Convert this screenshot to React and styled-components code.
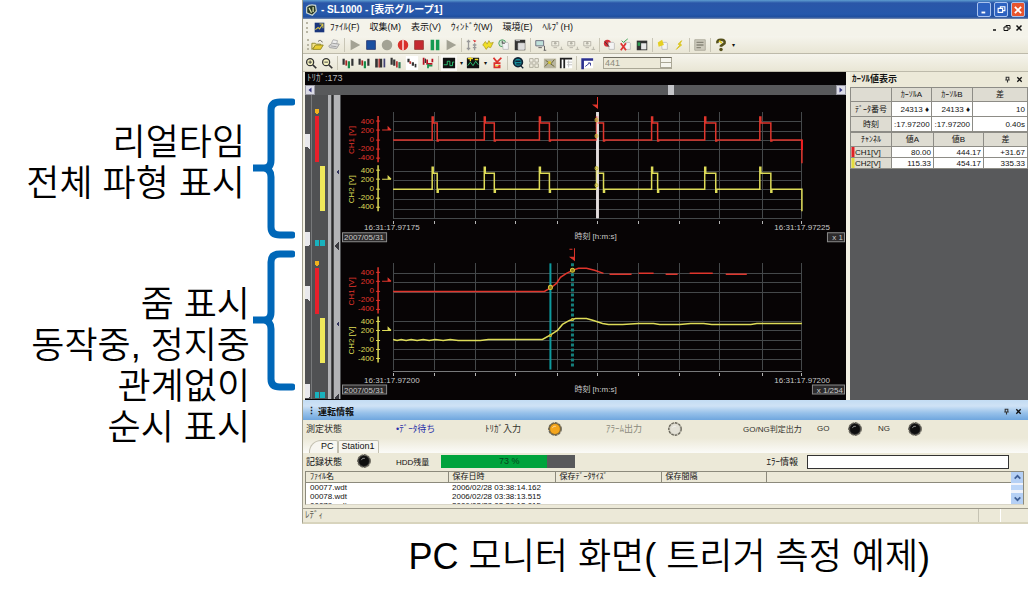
import styled, { createGlobalStyle } from 'styled-components';

const GlobalStyle = createGlobalStyle`
  * { box-sizing: border-box; }
  body {
    margin: 0;
    background: #fff;
    color: #111;
    font-family: "Liberation Sans", "Noto Sans CJK JP", sans-serif;
    font-size: 9px;
  }
  button, input { font: inherit; color: inherit; }
`;

const Page = styled.main`
  display: grid;
  grid-template-columns: 302px 1fr;
`;

const Notes = styled.aside`
  display: flex;
  flex-direction: column;
  gap: 11px;
  padding: 98px 7px 0 0;
`;

const NoteRow = styled.div`
  display: flex;
  align-items: flex-start;
  height: 141px;
`;

const NoteText = styled.p`
  flex: 1;
  margin: 0;
  padding-top: ${({ $top }) => $top}px;
  padding-right: ${({ $right }) => $right}px;
  text-align: right;
  white-space: nowrap;
  font: 350 36px/41px "Liberation Sans", "Noto Sans CJK KR", sans-serif;
  color: #000;
`;

const Caption = styled.p`
  grid-column: 2;
  margin: 0;
  padding: 12px 98px 0 0;
  text-align: right;
  white-space: nowrap;
  font: 350 36px/41px "Liberation Sans", "Noto Sans CJK KR", sans-serif;
  color: #000;
`;

const Window = styled.section`
  min-width: 0;
  background: #ece9d8;
  border-left: 1px solid #a09e8e;
  border-bottom: 2px solid #d8d4bd;
`;

const TitleBar = styled.header`
  display: flex;
  align-items: center;
  gap: 3px;
  height: 19px;
  padding: 0 3px 0 2px;
  background: linear-gradient(#5e9dd0 0, #2a56a8 3px, #2658ab 14px, #1f4f9f 17px, #7e8fae 19px);
  color: #fff;
`;

const WindowTitle = styled.h1`
  flex: 1;
  margin: 0;
  font-size: 10px;
  font-weight: 700;
  line-height: 17px;
`;

const CaptionButton = styled.button`
  display: grid;
  place-items: center;
  width: 14px;
  height: 15px;
  padding: 0;
  border: 1px solid #a9c3ee;
  border-radius: 2px;
  background: ${({ $close }) => ($close ? '#e8552f' : '#2d62c0')};
`;

const MenuBar = styled.nav`
  display: flex;
  align-items: center;
  gap: 5px;
  height: 17px;
  padding: 0 5px 0 3px;
  background: #f4f3ea;
`;

const MenuList = styled.div`
  display: flex;
  gap: 10px;
`;

const MenuButton = styled.button`
  padding: 0;
  border: 0;
  background: none;
  font-size: 9px;
  line-height: 15px;
  white-space: nowrap;
`;

const ChildControls = styled.div`
  display: flex;
  gap: 4px;
  margin-left: auto;
`;

const BareButton = styled.button`
  display: grid;
  place-items: center;
  padding: 0;
  border: 0;
  background: none;
`;

const Grip = styled.span`
  width: 3px;
  height: 11px;
  border-left: 2px dotted #b9b6a5;
`;

const ToolBar = styled.div`
  display: flex;
  align-items: center;
  height: 18px;
  padding-left: ${({ $left }) => $left}px;
  border-bottom: 1px solid #bdbaaa;
  background: linear-gradient(#f5f4ec, #e9e6d5);
`;

const ToolButton = styled.button`
  display: grid;
  place-items: center;
  width: 16px;
  height: 16px;
  padding: 0;
  border: 0;
  background: ${({ $on }) => ($on ? '#fbfaf6' : 'none')};
`;

const DropMark = styled.button`
  width: 8px;
  padding: 0;
  border: 0;
  background: none;
  font-size: 6px;
`;

const Divider = styled.span`
  width: 1px;
  height: 14px;
  margin: 0 2px;
  background: #c9c6b6;
`;

const Spinner = styled.div`
  display: flex;
  width: 69px;
  height: 12px;
  margin-left: 8px;
  border: 1px solid #aaa796;
  border-top-color: #6f6d61;
`;

const SpinnerInput = styled.input`
  flex: 1;
  min-width: 0;
  padding: 0 1px;
  border: 0;
  background: #ece9d8;
  color: #8b897c;
  font-size: 9px;
`;

const SpinnerKeys = styled.div`
  display: flex;
  flex-direction: column;
  width: 11px;
  border-left: 1px solid #aaa796;
`;

const SpinnerKey = styled.button`
  flex: 1;
  padding: 0;
  border: 0;
  border-bottom: 1px solid #aaa796;
  background: #f6f5ee;
`;

const Workspace = styled.div`
  display: grid;
  grid-template-columns: 1fr 178px;
  gap: 4px;
  padding-left: 2px;
  background: #f3f1e4;
`;

const WaveView = styled.div`
  min-width: 0;
  background: #070405;
`;

const WaveInfo = styled.div`
  height: 13px;
  padding-left: 2px;
  color: #b9b9b9;
  font-size: 9px;
  line-height: 13px;
`;

const ScrollTrack = styled.div`
  display: flex;
  align-items: center;
  justify-content: space-between;
  height: 10px;
  background: #58595b;
`;

const ScrollEnd = styled.button`
  display: grid;
  place-items: center;
  width: 10px;
  height: 10px;
  padding: 0;
  border: 1px solid #9a9aa4;
  background: #dcdce6;
`;

const ScrollThumb = styled.span`
  width: 6px;
  height: 10px;
  margin-left: 190px;
  background: #c4c5c8;
`;

const WaveBody = styled.div`
  display: grid;
  grid-template-columns: 36px 1fr;

  svg {
    display: block;
    width: 100%;
  }
`;

const CursorDock = styled.aside`
  min-width: 0;
  background: #58595b;
`;

const DockHeader = styled.h2`
  display: flex;
  align-items: center;
  gap: 5px;
  height: 15px;
  margin: 0;
  padding: 0 5px 0 2px;
  background: #ece9d8;
  font-size: 9px;
  font-weight: 700;
  line-height: 13px;

  span { flex: 1; }
`;

const CursorTable = styled.table`
  width: 100%;
  table-layout: fixed;
  border-collapse: collapse;
  font-size: 8px;
  line-height: ${({ $row }) => $row - 2}px;
  background: #fff;

  th, td {
    height: ${({ $row }) => $row}px;
    padding: 0 2px;
    border: 1px solid #8d8c86;
    overflow: hidden;
    white-space: nowrap;
    text-align: right;
  }
  th {
    background: #dedcd2;
    font-weight: 400;
    text-align: center;
  }
  thead th { height: 14px; }
`;

const ChannelHead = styled.th`
  && {
    padding-left: 4px;
    background: linear-gradient(90deg, ${({ $color }) => $color} 3px, #dedcd2 3px);
    text-align: left;
  }
`;

const Pane = styled.section`
  background: #ece9d8;
`;

const PaneHeader = styled.h2`
  display: flex;
  align-items: center;
  gap: 2px;
  height: 20px;
  margin: 0;
  padding: 3px 6px 0 4px;
  background: linear-gradient(#c3dcf3, #cfe2f5 6px, #97c1ea 13px, #6fa6de);
  font-size: 9px;
  font-weight: 700;

  span { flex: 1; }
  button + button { margin-left: 3px; }
`;

const StateRow = styled.div`
  display: grid;
  grid-template-columns: 90px 89px 62px 59px 61px 76px 74px 30px 31px 29px 1fr;
  align-items: center;
  height: 18px;
  padding-left: 3px;
  white-space: nowrap;
  font-size: 9px;
`;

const StateText = styled.span`
  color: ${({ $color }) => $color || '#33322d'};
  font-size: ${({ $small }) => ($small ? 8 : 9)}px;
`;

const Tabs = styled.div`
  display: flex;
  align-items: flex-end;
  height: 15px;
  padding-left: 6px;
  background: linear-gradient(#ece9d8, #fbfbf8);
`;

const Tab = styled.button`
  height: 13px;
  padding: 0 3px;
  padding-left: ${({ $first }) => ($first ? 11 : 3)}px;
  border: 1px solid #c3c0b0;
  border-bottom: 0;
  border-radius: ${({ $first }) => ($first ? '12px 2px 0 0' : '2px 2px 0 0')};
  background: #f7f6f0;
  font-size: 9px;
  line-height: 11px;
`;

const RecordRow = styled.div`
  display: flex;
  align-items: center;
  height: 18px;
  padding: 0 19px 0 3px;
  white-space: nowrap;
  font-size: 9px;
`;

const RecordLabel = styled.span`
  width: ${({ $width }) => $width}px;
  font-size: ${({ $small }) => ($small ? 8 : 9)}px;
`;

const DiskMeter = styled.div`
  width: 134px;
  height: 13px;
  background: #58595b;
`;

const DiskFill = styled.div`
  height: 100%;
  background: #00a33d;
  color: #06431c;
  line-height: 13px;
  padding-left: 58px;
`;

const ErrorField = styled.label`
  display: flex;
  flex: 1;
  align-items: center;
  justify-content: flex-end;
  gap: 9px;
`;

const ErrorInput = styled.input`
  width: 202px;
  height: 14px;
  border: 1px solid #333;
  background: #fff;
`;

const FileArea = styled.div`
  display: flex;
  height: 34px;
  margin: 0 4px 0 2px;
  border: 1px solid #8c8a7c;
  border-bottom-color: #d9d6c8;
  background: #fff;
  overflow: hidden;
`;

const FileTable = styled.table`
  flex: 1;
  align-self: flex-start;
  width: 100%;
  table-layout: fixed;
  border-collapse: collapse;
  font-size: 8px;

  th, td {
    height: 9px;
    padding: 0 4px;
    overflow: hidden;
    text-align: left;
    white-space: nowrap;
    font-weight: 400;
    line-height: 9px;
  }
  th {
    height: 11px;
    border-right: 1px solid #8c8a7c;
    border-bottom: 1px solid #8c8a7c;
    background: #ece9d8;
  }
  th:last-child { border-right: 0; }
`;

const FileScroll = styled.div`
  display: flex;
  flex-direction: column;
  justify-content: space-between;
  width: 12px;
  background: #f0f3fb;
`;

const FileScrollKey = styled.button`
  display: grid;
  place-items: center;
  height: 11px;
  padding: 0;
  border: 0;
  background: #b5d0f5;
`;

const FileScrollThumb = styled.span`
  height: 5px;
  background: #bdd6f8;
`;

const StatusBar = styled.footer`
  display: flex;
  justify-content: space-between;
  height: 14px;
  margin-top: 3px;
  padding: 0 27px 0 2px;
  border-top: 1px solid #9c998b;
  color: #55534a;
  font-size: 9px;
  line-height: 13px;
`;

const StatusCell = styled.span`
  width: 23px;
  border-left: 1px solid #c6c3b3;
  border-right: 1px solid #fff;
`;

function Brace() {
  return (
    <svg width="45" height="141" viewBox="0 0 45 141" fill="none" stroke="#0067b8" strokeWidth="7" strokeLinecap="round" aria-hidden="true">
      <path d="M42 4H30Q21 4 21 12V62Q21 70 14 70H3H14Q21 71 21 79V129Q21 137 30 137H42" />
    </svg>
  );
}

const disc = (
  <path d="M6 5h6l1 1v7H7z" fill="#f4f4f4" stroke="#aaa" strokeWidth=".7" />
);

const icons = {
  open: (
    <>
      <path d="M1 13V6h4l1 1h5v2H5z" fill="#f5e48a" stroke="#8c8325" />
      <path d="M2 13 5 8h9l-3 5z" fill="#e8cd32" stroke="#8c8325" />
      <path d="M8 4q3-3 5 1" stroke="#555" fill="none" />
    </>
  ),
  print: (
    <>
      <path d="m5 6 2-4 5 1-1 4" fill="#eee" stroke="#aaa" />
      <path d="m2 9 4-3 8 1-3 5-8-1z" fill="#ddd" stroke="#999" />
      <path d="m4 9 7 1" stroke="#999" />
    </>
  ),
  play: <path d="M3 2v12l11-6z" fill="#a3a294" />,
  blue: <path d="M3 3h10v10H3z" fill="#1a4fa0" stroke="#2b3c74" />,
  record: <circle cx="8" cy="8" r="6" fill="#a3a294" />,
  split: (
    <>
      <circle cx="8" cy="8" r="6" fill="#d8302a" />
      <path d="M8 2v12" stroke="#fff" strokeWidth="1.500" />
    </>
  ),
  stop: <path d="M3 3h10v10H3z" fill="#c52a30" stroke="#9b3a35" />,
  pause: <path d="M3 2h4v12H3zM9 2h4v12H9z" fill="#169a52" />,
  level: (
    <>
      <path d="M4 2v12M11 6v8M2 4h4M9 8h4M2 12h4M9 11h4" stroke="#999" strokeWidth="1.500" />
      <path d="M9 2l4 1-2 2z" fill="#d33" />
    </>
  ),
  link: <path d="M2 8l3-4 2 3 2-4 2 3 3-1-3 6-3-1-2 3-2-3z" fill="#f1df25" stroke="#b5a52a" />,
  clock: (
    <>
      <circle cx="6" cy="6" r="4" fill="#cfe8d3" stroke="#459a5e" />
      {disc}
      <path d="M6 3v3h3" stroke="#444" fill="none" />
    </>
  ),
  form: (
    <>
      <path d="M2 2h12v12H2z" fill="#333" />
      <path d="M6 6h7v7H6zM3 3h5" fill="#ddd" stroke="#ddd" />
    </>
  ),
  screen: (
    <>
      <path d="M2 3h9v6H2z" fill="#bfe0da" stroke="#667" />
      <path d="M5 11h4M12 9v5M11 14h3" stroke="#555" />
    </>
  ),
  screenOff: (
    <>
      <path d="M2 4h8v5H2zM4 11h4M11 13h4M13 10v3" fill="none" stroke="#b2b0a5" />
      <circle cx="6" cy="6" r="1.500" fill="#b2b0a5" />
    </>
  ),
  markRed: (
    <>
      <circle cx="5" cy="6" r="4" fill="#d32e36" />
      {disc}
      <path d="M2 4l5 6" stroke="#333" />
    </>
  ),
  markCross: (
    <>
      {disc}
      <path d="M2 6l6 8M8 6l-6 8" stroke="#df3333" fill="none" strokeWidth="2" />
      <path d="M3 3l2 2 5-4" stroke="#289846" />
    </>
  ),
  markFlag: (
    <>
      <path d="M2 3h12v11H2z" fill="#333" />
      <path d="M7 6h6v7H7z" fill="#e8e8e8" />
      <path d="M3 5h3v4H3z" fill="#2b9d52" />
    </>
  ),
  bell: (
    <>
      {disc}
      <path d="M2 5l5-3 2 6-6 2z" fill="#e5cf24" />
    </>
  ),
  spark: <path d="M11 3l-4 4 2 1-4 5 1-1 5-4-2-1z" fill="#e5cf24" stroke="#d8c220" />,
  list: (
    <>
      <path d="M2 2h12v12H2z" fill="#ccc9bb" stroke="#aaa899" />
      <path d="M4 5h8M4 8h8M4 11h5" stroke="#888679" strokeWidth="1.500" />
    </>
  ),
  help: (
    <>
      <path d="M4 6q-1-4 4-4t4 4l-4 3v1" fill="none" stroke="#55501c" strokeWidth="3" />
      <path d="M6 3l3 3" stroke="#e5cf24" strokeWidth="2" />
      <circle cx="8" cy="13" r="2" fill="#55501c" />
    </>
  ),
  zoomIn: (
    <>
      <circle cx="7" cy="7" r="4" fill="#f6f3c0" stroke="#333" strokeWidth="1.500" />
      <path d="M10 10l4 4" stroke="#333" strokeWidth="2" />
      <path d="M5 7h4M7 5v4" stroke="#333" />
    </>
  ),
  zoomOut: (
    <>
      <circle cx="7" cy="7" r="4" fill="#f6f3c0" stroke="#333" strokeWidth="1.500" />
      <path d="M10 10l4 4" stroke="#333" strokeWidth="2" />
      <path d="M5 7h4" stroke="#333" />
    </>
  ),
  barsA: (
    <>
      <path d="M3 3v7M13 3v8" stroke="#333" strokeWidth="2.500" />
      <path d="M6 5v6" stroke="#a22" strokeWidth="2" />
      <path d="M9 6v8" stroke="#178b48" strokeWidth="2.500" />
    </>
  ),
  barsB: (
    <>
      <path d="M4 3v10M9 3v10" stroke="#333" strokeWidth="3" />
      <path d="M7 3v10" stroke="#a22" strokeWidth="1.500" />
      <path d="M13 3v10" stroke="#447" strokeWidth="2" />
    </>
  ),
  barsC: (
    <>
      <path d="M3 2v8M6 4v7" stroke="#333" strokeWidth="2.500" />
      <path d="M9 6v7" stroke="#b33" strokeWidth="2" />
      <path d="M12 7v7" stroke="#2a7a55" strokeWidth="2.500" />
    </>
  ),
  barsE: (
    <>
      <path d="M1 0h14v16H1z" fill="#fff" />
      <path d="M4 3v4M9 7v4" stroke="#333" strokeWidth="2.500" />
      <path d="M6 6v3" stroke="#b33" strokeWidth="2" />
      <path d="M12 9v4" stroke="#333" strokeWidth="2" />
    </>
  ),
  barsD: (
    <>
      <path d="M3 2v8M7 4v5h6M13 3v4" stroke="#b12" strokeWidth="2" />
      <path d="M8 9v5M8 11h5" stroke="#1a9350" strokeWidth="2" />
      <path d="M5 3v5" stroke="#333" strokeWidth="1.500" />
    </>
  ),
  wave: (
    <>
      <path d="M1 2h14v12H1z" fill="#111" />
      <path d="M2 10h4V6h3v5h3V7h2" fill="none" stroke="#2fd07a" />
    </>
  ),
  waveStar: (
    <>
      <path d="M1 2h14v12H1z" fill="#111" />
      <path d="M2 11l3-4 3 4 3-5 3 4" fill="none" stroke="#2fd07a" />
      <path d="M5 1v5M2 3h6M10 4h4" stroke="#f0d927" strokeWidth="1.500" />
    </>
  ),
  pin: (
    <>
      <path d="M4 2l4 5 5-5M4 8h8" fill="none" stroke="#dc302b" strokeWidth="2" />
      <path d="M5 9v4h7M9 11h3" stroke="#dc302b" strokeWidth="2" />
      <path d="M6 11h4" stroke="#f0d927" />
    </>
  ),
  globe: (
    <>
      <circle cx="8" cy="7" r="5" fill="#168e9b" stroke="#123" strokeWidth="2" />
      <path d="M5 6h6M6 9h5M11 11l3 3" stroke="#123" strokeWidth="1.500" />
    </>
  ),
  grid: <path d="M3 3h4v4H3zM9 3h4v4H9zM3 9h4v4H3zM9 9h4v4H9z" fill="none" stroke="#aaa798" />,
  picture: (
    <>
      <path d="M1 3h14v11H1z" fill="#b8b59f" />
      <path d="M2 12l5-5 2 2 4-5M3 5l10 7" stroke="#67602a" fill="none" />
      <path d="M6 6h3v3H6z" fill="#d8c930" />
    </>
  ),
  columns: (
    <>
      <path d="M2 2h13v12H2z" fill="#fff" />
      <path d="M2 14V3h13M6 4v10" stroke="#222" fill="none" strokeWidth="2" />
      <path d="M9 7h6M9 10h6M11 5v8" stroke="#bbb" />
    </>
  ),
  window: (
    <>
      <path d="M2 2h13v12H2z" fill="#fff" />
      <path d="M3 15V4h12" stroke="#2a2f8f" fill="none" strokeWidth="3" />
      <path d="M6 12l5-4M9 8h3v3" stroke="#2a2f8f" fill="none" />
    </>
  ),
  app: (
    <>
      <path d="M1 1h14v14H1z" fill="#19357c" />
      <path d="M2 11l4-3 2 2 5-7M8 3h5v6" stroke="#dfc942" fill="none" strokeWidth="1.500" />
    </>
  ),
  logo: (
    <>
      <path d="M2 5q4-4 11-2l1 7-5 5-7-3z" fill="#2b3b2b" stroke="#c9d4cf" strokeWidth="1.500" />
      <path d="M5 6l3 6M10 5v6" stroke="#dfe5ac" strokeWidth="1.500" />
    </>
  ),
  pushpin: <path d="M5 3h6v6H5zM3 9h10M8 9v6" fill="none" stroke="#333" strokeWidth="2.500" />,
  close: <path d="M3 3l10 10M13 3L3 13" stroke="currentColor" strokeWidth="3" />,
  minimize: <path d="M4 12h6" stroke="currentColor" strokeWidth="3" />,
  restore: <path d="M6 6V3h8v7h-3M2 6h8v7H2z" fill="none" stroke="currentColor" strokeWidth="2" />,
  left: <path d="M11 3v10L5 8z" fill="#33357c" />,
  right: <path d="M5 3v10l6-5z" fill="#33357c" />,
  up: <path d="M3 10l5-5 5 5" fill="none" stroke="#3f5f95" strokeWidth="3" />,
  down: <path d="M3 6l5 5 5-5" fill="none" stroke="#3f5f95" strokeWidth="3" />,
};

function Icon({ name, size = 14 }) {
  return (
    <svg width={size} height={size} viewBox="0 0 16 16" fill="none" aria-hidden="true">
      {icons[name]}
    </svg>
  );
}

function Lamp({ color, ring }) {
  return (
    <svg width="16" height="16" viewBox="0 0 18 18" aria-hidden="true">
      <circle cx="9" cy="9" r="7" fill={ring} stroke="#6a675c" strokeWidth="1.500" strokeDasharray="3 1" />
      <circle cx="9" cy="9" r="5.500" fill={color} />
      <path d="M6 8q1-3 4-2" stroke="#fff" strokeOpacity=".6" fill="none" />
    </svg>
  );
}

const transportTools = [
  ['open', 'print'],
  ['play', 'blue', 'record', 'split', 'stop', 'pause', 'play'],
  ['level', 'link', 'clock', 'form'],
  ['screen', 'screenOff', 'screenOff', 'screenOff'],
  ['markRed', 'markCross', 'markFlag'],
  ['bell', 'spark'],
  ['list'],
  ['help', 'drop'],
];

const viewTools = [
  ['zoomIn', 'zoomOut'],
  ['barsA', 'barsA', 'barsB', 'barsC', 'barsE', 'barsD'],
  ['wave', 'drop', 'waveStar', 'drop', 'pin'],
  ['globe', 'grid', 'picture', 'columns'],
  ['window'],
];

function ToolGroups({ groups }) {
  return groups.map((group, g) => [
    g > 0 && <Divider key={`d${g}`} />,
    ...group.map((name, i) =>
      name === 'drop' ? (
        <DropMark key={`${g}-${i}`} aria-label="more">▾</DropMark>
      ) : (
        <ToolButton key={`${g}-${i}`} aria-label={name} $on={name === 'wave'}>
          <Icon name={name} />
        </ToolButton>
      )
    ),
  ]);
}

const menus = ['ﾌｧｲﾙ(F)', '収集(M)', '表示(V)', 'ｳｨﾝﾄﾞｳ(W)', '環境(E)', 'ﾍﾙﾌﾟ(H)'];

const RED = '#e0352c';
const YELLOW = '#dedc58';
const gridX = [52, 93, 134, 174, 216, 256, 297, 338, 378, 421, 460];

// [start, end] of every pulse in the overview
const pulses = [[92, 96], [144, 153], [199, 208], [256, 262], [311, 316], [364, 374], [419, 429]];

function pulsePath(base, top, under, end) {
  const steps = pulses.map(
    ([a, b]) => `H${a - 1}V${top - 6}H${a}V${top}H${b}V${base + under}H${b + 1}V${base}`
  );
  return `M52 ${base}${steps.join('')}H460V${end}`;
}

function Axis({ color, label, y }) {
  return (
    <g fill={color} stroke="none" fontSize="8">
      <path d={`M37 ${y - 24}V${y + 22}`} stroke={color} strokeWidth="1.500" />
      {['400', '200', '0', '-200', '-400'].map((text, i) => (
        <g key={text}>
          <text x="33" y={y - 16 + i * 9} textAnchor="end">{text}</text>
          <path d={`M35 ${y - 19 + i * 9 + (i > 1 ? 1 : 0)}h4`} stroke={color} />
        </g>
      ))}
      <text transform={`translate(13 ${y}) rotate(-90)`} textAnchor="middle">{label}</text>
      <path d={`M41 ${y - 10}h9M47 ${y - 10}v-3l3 3`} stroke={color} />
    </g>
  );
}

function TimeScale({ y, start, end, zoom, zoomWidth }) {
  return (
    <g fill="#c9c9c9" fontSize="8">
      <text x="23" y={y}>{start}</text>
      <text x="488" y={y} textAnchor="end">{end}</text>
      <text x="254" y={y + 9} textAnchor="middle">時刻 [h:m:s]</text>
      <path d={`M1.500 ${y + 2.500}h44v9h-44zM${502.500 - zoomWidth} ${y + 2.500}h${zoomWidth}v9h-${zoomWidth}z`} fill="#2d2b2c" stroke="#8a8a8a" />
      <text x="3" y={y + 10}>2007/05/31</text>
      <text x="501" y={y + 10} textAnchor="end">{zoom}</text>
    </g>
  );
}

function WaveChart() {
  const top = [26, 36, 45, 54, 76, 85, 94, 104, 114, 123];
  const bottom = [178, 187, 197, 226, 235, 245, 254, 264];
  return (
    <svg viewBox="0 0 504 304" role="img" aria-label="CH1 / CH2">
      <g stroke="#44484a" strokeWidth="1" shapeRendering="crispEdges">
        <path d={gridX.map((x) => `M${x} 17V123M${x} 168V274`).join('')} />
        <path d={top.map((y) => `M52 ${y}H460`).join('')} />
        <path d={bottom.map((y) => `M52 ${y}H460`).join('')} />
        <path d="M52 276H460" stroke="#77797a" />
        <path d={gridX.map((x) => `M${x} 126v3M${x} 277v3`).join('')} stroke="#b5b5b5" />
      </g>

      <path d="M256 17V123" stroke="#cfcaca" strokeWidth="3" />
      <path d={pulsePath(45, 28, 1, 68)} fill="none" stroke={RED} strokeWidth="1.500" />
      <path d={pulsePath(94, 78, 3, 116)} fill="none" stroke={YELLOW} strokeWidth="1.500" />
      <path d="M460 45V55" stroke="#f01f22" strokeWidth="2" />
      <path d="M256 17V123" stroke="#e9e5e5" strokeWidth="2" strokeOpacity=".7" />
      <g fill="none" stroke="#c9bd3a">
        <circle cx="255" cy="25" r="1.500" />
        <circle cx="255" cy="41" r="1.500" />
        <circle cx="255" cy="73" r="1.500" />
        <circle cx="255" cy="90" r="1.500" />
      </g>
      <path d="M256 2V13M252 10h4v3z" stroke={RED} fill={RED} />

      <Axis color={RED} label="CH1 [V]" y={45} />
      <Axis color={YELLOW} label="CH2 [V]" y={94} />
      <TimeScale y={135} start="16:31:17.97175" end="16:31:17.97225" zoom="x 1" zoomWidth={17} />

      <path d="M209 168V274" stroke="#0d9a9e" strokeWidth="2" />
      <path d="M231 168V272" stroke="#147f7c" strokeWidth="3" strokeDasharray="3 2" />
      <path
        d="M52 196H203L210 192L215 188L219 182L225 178L231 175L237 173H245L253 175L262 178"
        fill="none"
        stroke={RED}
        strokeWidth="1.500"
      />
      <path d="M268 179h22M297 178h15M324 179h12M348 178h23M384 179h21" stroke={RED} strokeWidth="1.500" />
      <path
        d="M52 244l4 1 4-1 5 1 5-1 6 1 6-1 6 1 6-1 8 1 7-1 8 1h22l8-1h54L210 239L216 235L221 229L228 225L234 223H245L252 225L261 228L267 229H281L297 228H312L318 229H338L349 228H362L370 229H409L415 228H460"
        fill="none"
        stroke={YELLOW}
        strokeWidth="1.500"
      />
      <g fill="#8f7a1e" stroke="#d8c83a">
        <circle cx="209" cy="192" r="2" />
        <circle cx="231" cy="175" r="2" />
        <circle cx="209" cy="240" r="1" />
        <circle cx="231" cy="224" r="1" />
      </g>
      <path d="M233 153V165M229 162h4v3zM228 154h3" stroke={RED} fill={RED} />

      <Axis color={RED} label="CH1 [V]" y={196} />
      <Axis color={YELLOW} label="CH2 [V]" y={245} />
      <TimeScale y={287} start="16:31:17.97200" end="16:31:17.97200" zoom="x 1/254" zoomWidth={32} />
    </svg>
  );
}

function RangeStrip() {
  return (
    <svg viewBox="0 0 36 304" preserveAspectRatio="none" shapeRendering="crispEdges" aria-hidden="true">
      <path d="M0 0H36V304H0z" fill="#505153" />
      <path d="M6 0V304" stroke="#77787a" />
      <path d="M23 0h3v304h-3zM29 0h6v304h-6z" fill="#b3b4b7" />
      <path d="M27 0V304" stroke="#2b2b2c" />
      {[0, 152].map((y) => (
        <g key={y} transform={`translate(0 ${y})`}>
          <path d="M10 14h4v3l-2 3-2-3z" fill="#f0b21e" />
          <path d="M10 21h4v46h-4z" fill="#e8202b" />
          <path d="M15 71h5v45h-5z" fill="#efe75a" />
          <path d="M10 145h4v6h-4zM15 145h5v6h-5z" fill="#19b1bd" />
          <path d="M0 39h5v15l-3-2H0zM0 137h5v13l-3 1H0z" fill="#e9e9ec" />
          <path d="M31 77l3-3v6z" fill="#33345c" />
          <path d="M29 151l5-4v8z" fill="#3a3a40" />
        </g>
      ))}
    </svg>
  );
}

const files = [
  ['00077.wdt', '2006/02/28 03:38:14.162'],
  ['00078.wdt', '2006/02/28 03:38:13.515'],
  ['00079.wdt', '2006/02/28 03:38:13.015'],
];

function CursorPanel() {
  return (
    <CursorDock>
      <DockHeader>
        <span>ｶｰｿﾙ値表示</span>
        <BareButton aria-label="pin"><Icon name="pushpin" size={7} /></BareButton>
        <BareButton aria-label="close"><Icon name="close" size={7} /></BareButton>
      </DockHeader>
      <CursorTable $row={15}>
        <colgroup>
          <col width="41" />
          <col width="40" />
          <col width="41" />
          <col />
        </colgroup>
        <thead>
          <tr><th /><th>ｶｰｿﾙA</th><th>ｶｰｿﾙB</th><th>差</th></tr>
        </thead>
        <tbody>
          <tr><th>ﾃﾞｰﾀ番号</th><td>24313 ♦</td><td>24133 ♦</td><td>10</td></tr>
          <tr><th>時刻</th><td>:17.97200</td><td>:17.97200</td><td>0.40s</td></tr>
        </tbody>
      </CursorTable>
      <CursorTable $row={11}>
        <colgroup>
          <col width="41" />
          <col width="42" />
          <col width="50" />
          <col />
        </colgroup>
        <thead>
          <tr><th>ﾁｬﾝﾈﾙ</th><th>値A</th><th>値B</th><th>差</th></tr>
        </thead>
        <tbody>
          <tr><ChannelHead $color="#e01f26">CH1[V]</ChannelHead><td>80.00</td><td>444.17</td><td>+31.67</td></tr>
          <tr><ChannelHead $color="#e3dc3c">CH2[V]</ChannelHead><td>115.33</td><td>454.17</td><td>335.33</td></tr>
        </tbody>
      </CursorTable>
    </CursorDock>
  );
}

function StatusPane() {
  const diskUsed = 79;
  return (
    <Pane>
      <PaneHeader>
        <b>⋮</b>
        <span>運転情報</span>
        <BareButton aria-label="pin"><Icon name="pushpin" size={7} /></BareButton>
        <BareButton aria-label="close"><Icon name="close" size={7} /></BareButton>
      </PaneHeader>
      <StateRow>
        <StateText>測定状態</StateText>
        <StateText $color="#2a2fa8">•ﾃﾞｰﾀ待ち</StateText>
        <StateText>ﾄﾘｶﾞ入力</StateText>
        <Lamp color="#f4a51c" ring="#8c6a25" />
        <StateText $color="#8b897d">ｱﾗｰﾑ出力</StateText>
        <Lamp color="#e3e1d6" ring="#c9c7ba" />
        <StateText $small>GO/NG判定出力</StateText>
        <StateText $small>GO</StateText>
        <Lamp color="#0e0e0e" ring="#333" />
        <StateText $small>NG</StateText>
        <Lamp color="#0e0e0e" ring="#333" />
      </StateRow>
      <Tabs role="tablist">
        <Tab role="tab" $first>PC</Tab>
        <Tab role="tab">Station1</Tab>
      </Tabs>
      <RecordRow>
        <RecordLabel $width={50}>記録状態</RecordLabel>
        <RecordLabel $width={40}><Lamp color="#0e0e0e" ring="#333" /></RecordLabel>
        <RecordLabel $width={45} $small>HDD残量</RecordLabel>
        <DiskMeter>
          <DiskFill style={{ width: `${diskUsed}%` }}>73 %</DiskFill>
        </DiskMeter>
        <ErrorField>
          ｴﾗｰ情報
          <ErrorInput type="text" />
        </ErrorField>
      </RecordRow>
      <FileArea>
        <FileTable>
          <colgroup>
            <col width="142" />
            <col width="107" />
            <col width="106" />
            <col width="105" />
            <col />
          </colgroup>
          <thead>
            <tr><th>ﾌｧｲﾙ名</th><th>保存日時</th><th>保存ﾃﾞｰﾀｻｲｽﾞ</th><th>保存間隔</th><th /></tr>
          </thead>
          <tbody>
            {files.map(([name, saved]) => (
              <tr key={name}><td>{name}</td><td>{saved}</td><td /><td /><td /></tr>
            ))}
          </tbody>
        </FileTable>
        <FileScroll>
          <FileScrollKey aria-label="up"><Icon name="up" size={9} /></FileScrollKey>
          <FileScrollThumb />
          <FileScrollKey aria-label="down"><Icon name="down" size={9} /></FileScrollKey>
        </FileScroll>
      </FileArea>
      <StatusBar>
        <span>ﾚﾃﾞｨ</span>
        <StatusCell />
      </StatusBar>
    </Pane>
  );
}

export default function App() {
  return (
    <Page>
      <GlobalStyle />
      <Notes>
        <NoteRow>
          <NoteText $top={24} $right={5}>
            리얼타임<br />전체 파형 표시
          </NoteText>
          <Brace />
        </NoteRow>
        <NoteRow>
          <NoteText $top={34} $right={0}>
            줌 표시<br />동작중, 정지중<br />관계없이<br />순시 표시
          </NoteText>
          <Brace />
        </NoteRow>
      </Notes>

      <Window>
        <TitleBar>
          <Icon name="logo" size={13} />
          <WindowTitle>- SL1000 - [表示グループ1]</WindowTitle>
          <CaptionButton aria-label="minimize"><Icon name="minimize" size={10} /></CaptionButton>
          <CaptionButton aria-label="restore"><Icon name="restore" size={9} /></CaptionButton>
          <CaptionButton aria-label="close" $close><Icon name="close" size={10} /></CaptionButton>
        </TitleBar>
        <MenuBar>
          <Grip />
          <Icon name="app" size={11} />
          <MenuList>
            {menus.map((label) => (
              <MenuButton key={label}>{label}</MenuButton>
            ))}
          </MenuList>
          <ChildControls>
            <BareButton aria-label="minimize"><Icon name="minimize" size={8} /></BareButton>
            <BareButton aria-label="restore"><Icon name="restore" size={8} /></BareButton>
            <BareButton aria-label="close"><Icon name="close" size={8} /></BareButton>
          </ChildControls>
        </MenuBar>
        <ToolBar $left={4}>
          <Grip />
          <ToolGroups groups={transportTools} />
        </ToolBar>
        <ToolBar $left={0}>
          <ToolGroups groups={viewTools} />
          <Spinner>
            <SpinnerInput type="text" defaultValue="441" aria-label="position" />
            <SpinnerKeys>
              <SpinnerKey aria-label="up" />
              <SpinnerKey aria-label="down" />
            </SpinnerKeys>
          </Spinner>
        </ToolBar>

        <Workspace>
          <WaveView>
            <WaveInfo>ﾄﾘｶﾞ:173</WaveInfo>
            <ScrollTrack>
              <ScrollEnd aria-label="left"><Icon name="left" size={8} /></ScrollEnd>
              <ScrollThumb />
              <ScrollEnd aria-label="right"><Icon name="right" size={8} /></ScrollEnd>
            </ScrollTrack>
            <WaveBody>
              <RangeStrip />
              <WaveChart />
            </WaveBody>
          </WaveView>
          <CursorPanel />
        </Workspace>

        <StatusPane />
      </Window>

      <Caption>PC 모니터 화면( 트리거 측정 예제)</Caption>
    </Page>
  );
}
